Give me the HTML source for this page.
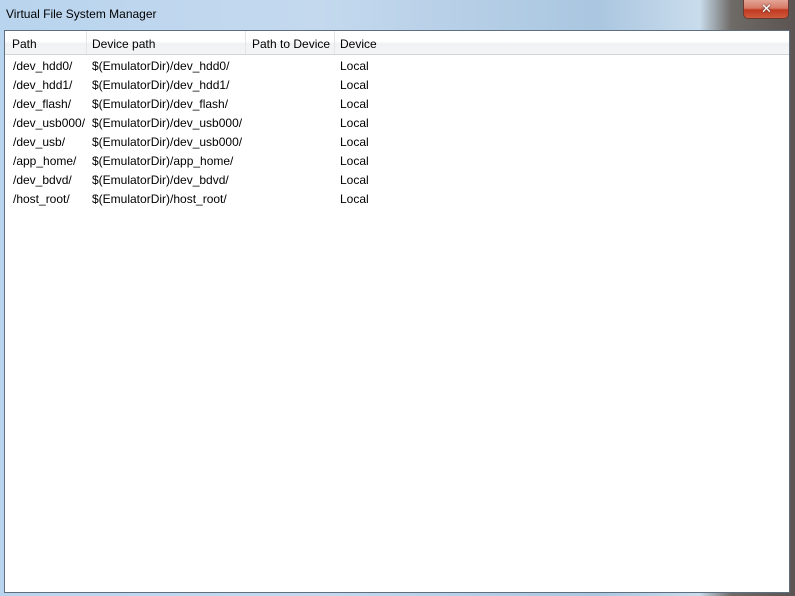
<!DOCTYPE html>
<html><head><style>
html,body{margin:0;padding:0;}
body{width:795px;height:596px;overflow:hidden;position:relative;font-family:"Liberation Sans",sans-serif;font-size:12px;
background:linear-gradient(90deg,#b9d4ee 0%,#c4d9ee 40%,#aac6e0 75%,#c9dcec 88%,#6e6a66 92%,#5b5452 100%);}
.title{position:absolute;left:6px;top:7px;font-size:12px;color:#000;}
.close{position:absolute;left:743px;top:0;width:46px;height:19px;border:1px solid #6a3a32;border-top:none;border-radius:0 0 5px 5px;
background:linear-gradient(#e3a597 0%,#d77a66 45%,#c13a20 55%,#cf5a3c 100%);box-sizing:border-box;}
.close span{position:absolute;left:17px;top:1px;color:#fff;font-size:13px;text-shadow:0 0 2px #333;}
.client{position:absolute;left:4px;top:30px;width:786px;height:563px;border:1px solid #5f6f7f;box-sizing:border-box;background:#fff;}
.hdr{position:absolute;left:0;top:0;width:100%;height:24px;background:linear-gradient(#fff 0%,#fff 45%,#f1f2f4 55%,#f3f4f6 100%);border-bottom:1px solid #d5d5d5;box-sizing:border-box;}
.hc{position:absolute;top:0;height:23px;line-height:26px;border-right:1px solid #e3e5e8;box-sizing:border-box;padding-left:6px;color:#000;}
.row{position:absolute;left:0;height:19px;line-height:19px;}
.row span{position:absolute;top:0;white-space:nowrap;}
</style></head><body>
<div class="title">Virtual File System Manager</div>
<div class="close"><span>✕</span></div>
<div class="client">
<div class="hdr">
<div class="hc" style="left:0;width:82px;padding-left:7px">Path</div>
<div class="hc" style="left:82px;width:159px;padding-left:5px">Device path</div>
<div class="hc" style="left:241px;width:89px">Path to Device</div>
<div class="hc" style="left:330px;width:454px;border-right:none;padding-left:5px">Device</div>
</div>
<div class="row" style="top:26px"><span style="left:8px">/dev_hdd0/</span><span style="left:87px">$(EmulatorDir)/dev_hdd0/</span><span style="left:335px">Local</span></div>
<div class="row" style="top:45px"><span style="left:8px">/dev_hdd1/</span><span style="left:87px">$(EmulatorDir)/dev_hdd1/</span><span style="left:335px">Local</span></div>
<div class="row" style="top:64px"><span style="left:8px">/dev_flash/</span><span style="left:87px">$(EmulatorDir)/dev_flash/</span><span style="left:335px">Local</span></div>
<div class="row" style="top:83px"><span style="left:8px">/dev_usb000/</span><span style="left:87px">$(EmulatorDir)/dev_usb000/</span><span style="left:335px">Local</span></div>
<div class="row" style="top:102px"><span style="left:8px">/dev_usb/</span><span style="left:87px">$(EmulatorDir)/dev_usb000/</span><span style="left:335px">Local</span></div>
<div class="row" style="top:121px"><span style="left:8px">/app_home/</span><span style="left:87px">$(EmulatorDir)/app_home/</span><span style="left:335px">Local</span></div>
<div class="row" style="top:140px"><span style="left:8px">/dev_bdvd/</span><span style="left:87px">$(EmulatorDir)/dev_bdvd/</span><span style="left:335px">Local</span></div>
<div class="row" style="top:159px"><span style="left:8px">/host_root/</span><span style="left:87px">$(EmulatorDir)/host_root/</span><span style="left:335px">Local</span></div>
</div>
</body></html>
